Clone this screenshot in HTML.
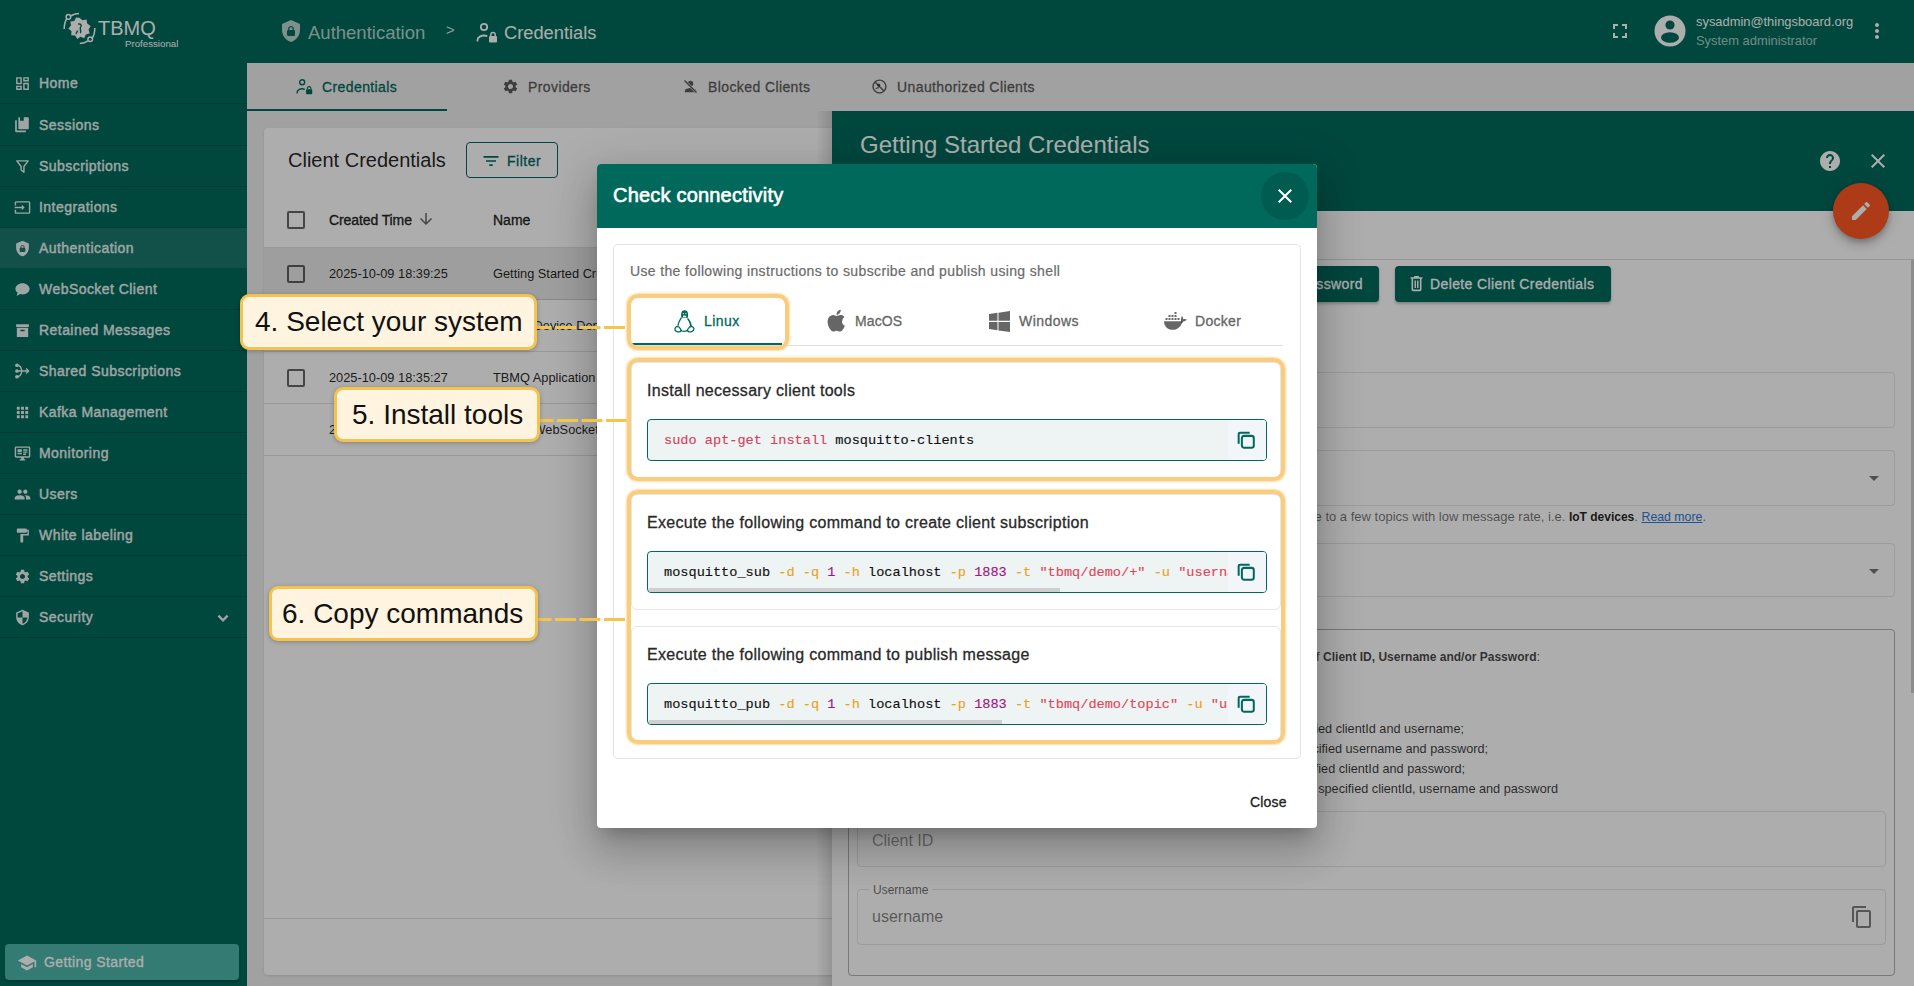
<!DOCTYPE html>
<html><head><meta charset="utf-8">
<style>
*{box-sizing:border-box;margin:0;padding:0}
html,body{width:1914px;height:986px;overflow:hidden;font-family:"Liberation Sans",sans-serif;background:#eeeeee;position:relative}
.a{position:absolute;white-space:nowrap}
svg{display:block}
#hdr{position:absolute;left:0;top:0;width:1914px;height:63px;background:#00695c}
#side{position:absolute;left:0;top:63px;width:247px;height:923px;background:#00695c}
.nav{position:absolute;left:0;width:247px;height:41px;border-bottom:1px solid rgba(0,0,0,0.16);color:#ebf3f2;font-size:14px;font-weight:normal;-webkit-text-stroke:0.4px currentColor;letter-spacing:0.45px}
.nav span{position:absolute;left:39px;top:12px}
.nav svg{position:absolute;left:14px;top:12px;width:17px;height:17px;fill:rgba(255,255,255,0.92)}
#tabs{position:absolute;left:247px;top:63px;width:1667px;height:48px;background:#eeeeee}
.tab{position:absolute;top:0;height:48px;font-size:14px;font-weight:normal;-webkit-text-stroke:0.3px currentColor;letter-spacing:0.4px;color:#5c5c5c}
.tab span{position:absolute;top:16px}
.tab svg{position:absolute;top:15px;width:17px;height:17px;fill:rgba(0,0,0,0.62)}
#card{position:absolute;left:264px;top:128px;width:620px;height:847px;background:#fff;border-radius:4px;box-shadow:0 1px 3px rgba(0,0,0,.12)}
#panel{position:absolute;left:832px;top:111px;width:1082px;height:875px;background:#ffffff}
#backdrop{position:absolute;left:0;top:0;width:1914px;height:986px;background:rgba(0,0,0,0.32)}
#dlg{position:absolute;left:597px;top:164px;width:720px;height:664px;background:#fff;border-radius:4px;box-shadow:0 11px 15px -7px rgba(0,0,0,.2),0 24px 38px 3px rgba(0,0,0,.14),0 9px 46px 8px rgba(0,0,0,.12);overflow:hidden}
#dlghdr{position:absolute;left:0;top:0;width:720px;height:64px;background:#00695c}
.ann{position:absolute;background:#fff4df;border:3px solid #f3c24f;border-radius:9px;font-size:28px;color:#111;box-shadow:0 1px 4px rgba(0,0,0,.25)}
.ann span{position:absolute;top:9px}
.dash{position:absolute;height:3px;background:repeating-linear-gradient(90deg,#f3c24f 0 14px,transparent 14px 22px)}
.hl{position:absolute;border:4px solid #f8cd80;border-radius:11px;box-shadow:0 0 2px 1px rgba(248,205,128,.7)}
.chk{position:absolute;width:18px;height:18px;border:2px solid rgba(0,0,0,0.6);border-radius:2px}
.row{position:absolute;left:0;width:620px;height:52px;border-bottom:1px solid rgba(0,0,0,0.12);font-size:12.8px;color:rgba(0,0,0,0.87)}
.fld{position:absolute;border:1px solid rgba(0,0,0,0.1);border-radius:4px}
.code{position:absolute;left:50px;width:620px;height:42px;background:#eef4f4;border:1px solid #00695c;border-radius:4px;overflow:hidden;font-family:"Liberation Mono",monospace;font-size:13.6px;color:#111}
.code .t{position:absolute;left:16px;top:13px;white-space:pre;-webkit-text-stroke:0.15px currentColor}
.code .cp{position:absolute;right:0;top:0;width:38px;height:40px;background:#f2f5f9}
.code .cp svg{position:absolute;left:7px;top:9px;width:22px;height:22px}
.code .sb{position:absolute;left:1px;bottom:0;height:4px;background:#cfcfcf;border-radius:0}
.sec{position:absolute;left:34px;width:650px;border:1px solid #e6e6e6;border-radius:6px;background:#fff}
.sec .ttl{position:absolute;left:15px;font-size:16px;font-weight:normal;-webkit-text-stroke:0.3px currentColor;color:#292929;letter-spacing:0.3px;white-space:nowrap}
.kw{color:#d7415f}.op{color:#e9a21a}.nm{color:#a3167f}.st{color:#e0475a}
</style></head><body>
<div id="hdr">
 <svg class="a" style="left:63px;top:12px" width="34" height="34" viewBox="0 0 34 34" fill="none" stroke="#fff" stroke-width="1.5">
  <path d="M1.2 17 C1.2 12 2.5 8.5 4 6.5"/><circle cx="5.4" cy="4.9" r="2.3"/><path d="M7.5 4 C10 2.5 13 1.8 16 1.6"/>
  <path d="M31.8 16 C31.8 21 30.5 24.5 29 26.5"/><circle cx="27.2" cy="27.3" r="2.3"/><path d="M25 28.8 C22.5 30.5 19.5 31.3 16.8 31.5"/>
  <path d="M16.4 5.8 L19.5 8.2 L23.5 7.6 L24.2 11.5 L27.6 14 L25.6 17.5 L26.6 21.4 L22.8 22.5 L21.3 26.2 L17.6 24.8 L14.2 27 L12.2 23.5 L8.2 23.2 L8.5 19.2 L5.4 16.6 L8 13.5 L7.4 9.6 L11.3 9 L13 5.4 Z" fill="#fff" stroke="none"/>
  <path d="M15 12.2 C17.5 11.5 19.2 13 17.6 15 C16.2 16.5 18.8 18.5 17.2 21 M14.6 18.5 L13 22" stroke="#00695c" stroke-width="1.4"/>
 </svg>
 <div class="a" style="left:98px;top:17px;font-size:20px;color:#fff">TBMQ</div>
 <div class="a" style="left:125px;top:38px;font-size:9.7px;color:#fff">Professional</div>
 <svg class="a" style="left:279px;top:19px" width="24" height="24" viewBox="0 0 24 24" fill="rgba(255,255,255,0.72)"><path d="M12 1L3 5v6c0 5.55 3.84 10.74 9 12 5.16-1.26 9-6.45 9-12V5l-9-4zm0 6c1.4 0 2.8 1.1 2.8 2.5V11c.6 0 1.2.6 1.2 1.2v3.5c0 .7-.6 1.3-1.2 1.3H9.2c-.7 0-1.2-.6-1.2-1.2v-3.5c0-.7.6-1.3 1.2-1.3V9.5C9.2 8.1 10.6 7 12 7zm0 1.2c-.8 0-1.5.5-1.5 1.3V11h3V9.5c0-.8-.7-1.3-1.5-1.3z" fill-rule="evenodd"/></svg>
 <div class="a" style="left:308px;top:22px;font-size:18.5px;color:rgba(255,255,255,0.72)">Authentication</div>
 <div class="a" style="left:446px;top:21px;font-size:15px;color:rgba(255,255,255,0.85)">&gt;</div>
 <svg class="a" style="left:476px;top:22px" width="22" height="21" viewBox="0 0 22 21" fill="none" stroke="#fff" stroke-width="1.8"><circle cx="8" cy="5" r="3.2"/><path d="M1.5 19.5 v-1.5 c0-3 4-4.5 6.5-4.5 c1.2 0 2.4.3 3.3.7"/><rect x="13" y="14" width="8" height="6.5" rx="1" fill="#fff" stroke="none"/><path d="M14.8 14.5 v-1.7 a2.2 2.2 0 0 1 4.4 0 v1.7" stroke-width="1.5"/></svg>
 <div class="a" style="left:504px;top:22px;font-size:18.3px;color:#fff">Credentials</div>
 <svg class="a" style="left:1608px;top:19px" width="24" height="24" viewBox="0 0 24 24" fill="#fff"><path d="M7 14H5v5h5v-2H7v-3zm-2-4h2V7h3V5H5v5zm12 7h-3v2h5v-5h-2v3zM14 5v2h3v3h2V5h-5z"/></svg>
 <svg class="a" style="left:1654px;top:15px" width="32" height="32" viewBox="0 0 32 32"><circle cx="16" cy="16" r="15.5" fill="#fff"/><circle cx="16" cy="10" r="4.6" fill="#00695c"/><ellipse cx="16" cy="22.5" rx="9" ry="5.2" fill="#00695c"/></svg>
 <div class="a" style="left:1696px;top:14px;font-size:12.9px;color:#fff">sysadmin@thingsboard.org</div>
 <div class="a" style="left:1696px;top:33px;font-size:12.9px;color:rgba(255,255,255,0.68)">System administrator</div>
 <svg class="a" style="left:1865px;top:19px" width="24" height="24" viewBox="0 0 24 24" fill="#fff"><path d="M12 8c1.1 0 2-.9 2-2s-.9-2-2-2-2 .9-2 2 .9 2 2 2zm0 2c-1.1 0-2 .9-2 2s.9 2 2 2 2-.9 2-2-.9-2-2-2zm0 6c-1.1 0-2 .9-2 2s.9 2 2 2 2-.9 2-2-.9-2-2-2z"/></svg>
</div>
<div id="side">
 <div class="nav" style="top:0"><svg viewBox="0 0 24 24"><path d="M19 5v2h-4V5h4M9 5v6H5V5h4m10 8v6h-4v-6h4M9 17v2H5v-2h4M21 3h-8v6h8V3zM11 3H3v10h8V3zm10 8h-8v10h8V11zm-10 4H3v6h8v-6z"/></svg><span>Home</span></div>
 <div class="nav" style="top:42px"><svg viewBox="0 0 24 24"><path d="M6.1 1.6a1.2 1.2 0 0 1 1.2-1.2h1.3v4.8h5.2V.4h5.9a1.2 1.2 0 0 1 1.2 1.2v14.4a1.2 1.2 0 0 1-1.2 1.2H7.3a1.2 1.2 0 0 1-1.2-1.2z"/><path d="M1.6 4.5H4v14.7h12.8v2.4H3.6a2 2 0 0 1-2-2z"/></svg><span>Sessions</span></div>
 <div class="nav" style="top:83px"><svg viewBox="0 0 24 24"><path d="M4 4h16l-6 8v8l-4-3v-5z" fill="none" stroke="rgba(255,255,255,0.92)" stroke-width="2" stroke-linejoin="round"/></svg><span>Subscriptions</span></div>
 <div class="nav" style="top:124px"><svg viewBox="0 0 24 24"><path d="M21 3.01H3c-1.1 0-2 .9-2 2V9h2V4.99h18v14.03H3V15H1v4.01c0 1.1.9 1.98 2 1.98h18c1.1 0 2-.88 2-1.98v-14c0-1.11-.9-2-2-2zM11 16l4-4-4-4v3H1v2h10v3z"/></svg><span>Integrations</span></div>
 <div class="nav" style="top:165px;background:rgba(255,255,255,0.1)"><svg viewBox="0 0 24 24"><path fill-rule="evenodd" d="M12 1L3 5v6c0 5.55 3.84 10.74 9 12 5.16-1.26 9-6.45 9-12V5l-9-4zm0 6c1.4 0 2.8 1.1 2.8 2.5V11c.6 0 1.2.6 1.2 1.2v3.5c0 .7-.6 1.3-1.2 1.3H9.2c-.7 0-1.2-.6-1.2-1.2v-3.5c0-.7.6-1.3 1.2-1.3V9.5C9.2 8.1 10.6 7 12 7zm0 1.2c-.8 0-1.5.5-1.5 1.3V11h3V9.5c0-.8-.7-1.3-1.5-1.3z"/></svg><span>Authentication</span></div>
 <div class="nav" style="top:206px"><svg viewBox="0 0 24 24"><path d="M12 3C6.5 3 2 6.6 2 11c0 2.2 1.1 4.1 2.9 5.6L4 21l4.6-2.5c1.1.3 2.2.5 3.4.5 5.5 0 10-3.6 10-8s-4.5-8-10-8z"/></svg><span>WebSocket Client</span></div>
 <div class="nav" style="top:247px"><svg viewBox="0 0 24 24"><path d="M3 3h18v4H3zM4 8h16v13H4zm5 3v2h6v-2z" fill-rule="evenodd"/></svg><span>Retained Messages</span></div>
 <div class="nav" style="top:288px"><svg viewBox="0 0 24 24"><circle cx="4.2" cy="3.2" r="2.6"/><circle cx="4.2" cy="11.3" r="2.6"/><circle cx="4.2" cy="19.4" r="2.6"/><path d="M4.5 3.2c4 0 6 4 6.5 8.1M4.5 19.4c4 0 6-4 6.5-8.1M5 11.3h15.5M17 7.8l3.6 3.5-3.6 3.5" fill="none" stroke="#ebf3f2" stroke-width="1.9"/></svg><span>Shared Subscriptions</span></div>
 <div class="nav" style="top:329px"><svg viewBox="0 0 24 24"><path d="M4 8h4V4H4v4zm6 12h4v-4h-4v4zm-6 0h4v-4H4v4zm0-6h4v-4H4v4zm6 0h4v-4h-4v4zm6-10v4h4V4h-4zm-6 4h4V4h-4v4zm6 6h4v-4h-4v4zm0 6h4v-4h-4v4z"/></svg><span>Kafka Management</span></div>
 <div class="nav" style="top:370px"><svg viewBox="0 0 24 24"><path d="M21 2H3c-1.1 0-2 .9-2 2v12c0 1.1.9 2 2 2h7v2H8v2h8v-2h-2v-2h7c1.1 0 2-.9 2-2V4c0-1.1-.9-2-2-2zm0 14H3V4h18v12zM5 6h6v4H5zm8 0h6v2h-6zm0 3h6v2h-6zM5 11h6v2H5zm8 1h4v2h-4z"/></svg><span>Monitoring</span></div>
 <div class="nav" style="top:411px"><svg viewBox="0 0 24 24"><path d="M16 11c1.66 0 2.99-1.34 2.99-3S17.66 5 16 5c-1.66 0-3 1.34-3 3s1.34 3 3 3zm-8 0c1.66 0 2.99-1.34 2.99-3S9.66 5 8 5C6.34 5 5 6.34 5 8s1.34 3 3 3zm0 2c-2.33 0-7 1.17-7 3.5V19h14v-2.5c0-2.33-4.67-3.5-7-3.5zm8 0c-.29 0-.62.02-.97.05 1.16.84 1.97 1.97 1.97 3.45V19h6v-2.5c0-2.33-4.67-3.5-7-3.5z"/></svg><span>Users</span></div>
 <div class="nav" style="top:452px"><svg viewBox="0 0 24 24"><path d="M18 4V3c0-.55-.45-1-1-1H5c-.55 0-1 .45-1 1v4c0 .55.45 1 1 1h12c.55 0 1-.45 1-1V6h1v4H9v11c0 .55.45 1 1 1h2c.55 0 1-.45 1-1v-9h8V4h-3z"/></svg><span>White labeling</span></div>
 <div class="nav" style="top:493px"><svg viewBox="0 0 24 24"><path d="M19.14 12.94c.04-.3.06-.61.06-.94 0-.32-.02-.64-.07-.94l2.03-1.58c.18-.14.23-.41.12-.61l-1.92-3.32c-.12-.22-.37-.29-.59-.22l-2.39.96c-.5-.38-1.03-.7-1.62-.94L14.4 2.81c-.04-.24-.24-.41-.48-.41h-3.84c-.24 0-.43.17-.47.41L9.25 5.35C8.66 5.59 8.12 5.92 7.63 6.29L5.24 5.33c-.22-.08-.47 0-.59.22L2.74 8.87c-.12.21-.08.47.12.61l2.03 1.58c-.05.3-.09.63-.09.94s.02.64.07.94l-2.03 1.58c-.18.14-.23.41-.12.61l1.92 3.32c.12.22.37.29.59.22l2.39-.96c.5.38 1.03.7 1.62.94l.36 2.54c.05.24.24.41.48.41h3.84c.24 0 .44-.17.47-.41l.36-2.54c.59-.24 1.13-.56 1.62-.94l2.39.96c.22.08.47 0 .59-.22l1.92-3.32c.12-.22.07-.47-.12-.61l-2.01-1.58zM12 15.6c-1.98 0-3.6-1.62-3.6-3.6s1.62-3.6 3.6-3.6 3.6 1.62 3.6 3.6-1.62 3.6-3.6 3.6z"/></svg><span>Settings</span></div>
 <div class="nav" style="top:534px"><svg viewBox="0 0 24 24"><path d="M12 1L3 5v6c0 5.55 3.84 10.74 9 12 5.16-1.26 9-6.45 9-12V5l-9-4zm0 10.99h7c-.53 4.12-3.28 7.79-7 8.94V12H5V6.3l7-3.11v8.8z"/></svg><span>Security</span><svg style="left:212px;top:10px;width:22px;height:22px" viewBox="0 0 24 24"><path d="M7 9.5l5 5 5-5" fill="none" stroke="rgba(255,255,255,0.92)" stroke-width="2.6"/></svg></div>
 <div class="a" style="left:5px;top:881px;width:234px;height:36px;background:#4db6ac;border-radius:4px;box-shadow:0 2px 2px rgba(0,0,0,.2)">
  <svg class="a" style="left:12px;top:9px" width="20" height="20" viewBox="0 0 24 24" fill="#fff"><path d="M5 13.18v4L12 21l7-3.82v-4L12 17l-7-3.82zM12 3L1 9l11 6 9-4.91V17h2V9L12 3z"/></svg>
  <div class="a" style="left:39px;top:10px;font-size:14px;font-weight:normal;-webkit-text-stroke:0.3px currentColor;letter-spacing:0.4px;color:#fff">Getting Started</div>
 </div>
</div>
<div id="tabs">
 <div class="tab" style="left:0;width:200px;color:#00695c"><svg style="left:49px;fill:none;stroke:#00695c" viewBox="0 0 22 21" stroke-width="1.8"><circle cx="8" cy="5" r="3.2"/><path d="M1.5 19.5 v-1.5 c0-3 4-4.5 6.5-4.5 c1.2 0 2.4.3 3.3.7"/><rect x="13" y="14" width="8" height="6.5" rx="1" fill="#00695c" stroke="none"/><path d="M14.8 14.5 v-1.7 a2.2 2.2 0 0 1 4.4 0 v1.7" stroke-width="1.5"/></svg><span style="left:75px">Credentials</span>
  <div class="a" style="left:0;top:46px;width:200px;height:2px;background:#00695c"></div></div>
 <div class="tab" style="left:200px;width:200px"><svg style="left:55px" viewBox="0 0 24 24"><path d="M19.14 12.94c.04-.3.06-.61.06-.94 0-.32-.02-.64-.07-.94l2.03-1.58c.18-.14.23-.41.12-.61l-1.920-3.32c-.12-.22-.37-.29-.59-.22l-2.39.96c-.5-.38-1.03-.7-1.62-.94L14.4 2.81c-.04-.24-.24-.41-.48-.41h-3.84c-.24 0-.43.17-.47.41L9.25 5.35C8.66 5.59 8.12 5.92 7.630 6.29L5.24 5.33c-.22-.08-.47 0-.59.22L2.74 8.87c-.12.21-.08.47.12.61l2.03 1.58c-.05.3-.09.63-.09.94s.02.64.07.94l-2.03 1.58c-.18.14-.23.41-.12.61l1.92 3.32c.12.22.37.29.59.22l2.39-.96c.5.38 1.030.7 1.62.94l.36 2.54c.05.24.24.41.48.41h3.84c.24 0 .44-.17.47-.41l.36-2.54c.59-.24 1.13-.56 1.62-.94l2.39.96c.22.08.47 0 .59-.22l1.92-3.32c.12-.22.07-.47-.12-.61l-2.01-1.58zM12 15.6c-1.98 0-3.6-1.620-3.6-3.6s1.62-3.6 3.6-3.6 3.6 1.62 3.6 3.6-1.62 3.6-3.6 3.6z"/></svg><span style="left:81px">Providers</span></div>
 <div class="tab" style="left:400px;width:200px"><svg style="left:35px" viewBox="0 0 24 24"><path d="M12 12c2.21 0 4-1.79 4-4s-1.79-4-4-4-4 1.79-4 4 1.79 4 4 4zm0 2c-2.67 0-8 1.34-8 4v2h16v-2c0-2.66-5.33-4-8-4z"/><path d="M3 3l18 18" stroke="#eeeeee" stroke-width="3.5"/><path d="M3.5 3.5l17 17" stroke="rgba(0,0,0,0.62)" stroke-width="2"/></svg><span style="left:61px">Blocked Clients</span></div>
 <div class="tab" style="left:600px;width:212px"><svg style="left:24px" viewBox="0 0 24 24"><path d="M12 2C6.48 2 2 6.48 2 12s4.48 10 10 10 10-4.48 10-10S17.52 2 12 2zm0 18c-4.42 0-8-3.58-8-8 0-1.85.63-3.55 1.69-4.9L16.9 18.31C15.55 19.37 13.85 20 12 20zm6.31-3.1L7.1 5.69C8.45 4.63 10.15 4 12 4c4.42 0 8 3.58 8 8 0 1.85-.63 3.55-1.69 4.9z"/><circle cx="11" cy="10" r="2.2"/><path d="M7 15.5c1-1.3 2.6-1.8 4-1.8" stroke="rgba(0,0,0,0.62)" stroke-width="1.8" fill="none"/></svg><span style="left:50px">Unauthorized Clients</span></div>
</div>
<div id="card">
 <div class="a" style="left:24px;top:21px;font-size:20px;color:rgba(0,0,0,0.87)">Client Credentials</div>
 <div class="a" style="left:202px;top:14px;width:92px;height:36px;border:1px solid #00695c;border-radius:4px">
  <svg class="a" style="left:14px;top:8px" width="20" height="20" viewBox="0 0 24 24" fill="#00695c"><path d="M10 18h4v-2h-4v2zM3 6v2h18V6H3zm3 7h12v-2H6v2z"/></svg>
  <div class="a" style="left:40px;top:10px;font-size:14px;font-weight:normal;-webkit-text-stroke:0.3px currentColor;letter-spacing:0.5px;color:#00695c">Filter</div>
 </div>
 <div class="chk" style="left:23px;top:83px"></div>
 <div class="a" style="left:65px;top:84px;font-size:14px;font-weight:normal;-webkit-text-stroke:0.3px currentColor;letter-spacing:-0.1px;color:#222">Created Time</div>
 <svg class="a" style="left:153px;top:82px" width="18" height="18" viewBox="0 0 24 24" fill="rgba(0,0,0,0.6)"><path d="M20 12l-1.41-1.41L13 16.17V4h-2v12.17l-5.58-5.59L4 12l8 8 8-8z"/></svg>
 <div class="a" style="left:229px;top:84px;font-size:14px;font-weight:normal;-webkit-text-stroke:0.3px currentColor;color:#222">Name</div>
 <div class="a" style="left:0;top:119px;width:620px;height:1px;background:rgba(0,0,0,0.12)"></div>
 <div class="row" style="top:120px;background:#e9e9e9"><div class="chk" style="left:23px;top:17px"></div><div class="a" style="left:65px;top:18px">2025-10-09 18:39:25</div><div class="a" style="left:229px;top:18px">Getting Started Credentials</div></div>
 <div class="row" style="top:172px"><div class="chk" style="left:23px;top:17px"></div><div class="a" style="left:65px;top:18px">2025-10-09 18:37:02</div><div class="a" style="left:229px;top:18px">TBMQ Device Demo Credentials</div></div>
 <div class="row" style="top:224px"><div class="chk" style="left:23px;top:17px"></div><div class="a" style="left:65px;top:18px">2025-10-09 18:35:27</div><div class="a" style="left:229px;top:18px">TBMQ Application Credentials</div></div>
 <div class="row" style="top:276px"><div class="a" style="left:65px;top:18px">2025-10-09 18:35:27</div><div class="a" style="left:229px;top:18px">TBMQ WebSocket Credentials</div></div>
 <div class="a" style="left:0;top:790px;width:620px;height:1px;background:rgba(0,0,0,0.12)"></div>
</div>
<div id="panel">
 <div class="a" style="left:-16px;top:0;width:16px;height:875px;background:linear-gradient(to right,rgba(0,0,0,0),rgba(0,0,0,0.14))"></div>
 <div class="a" style="left:0;top:0;width:1082px;height:100px;background:#00695c"></div>
 <div class="a" style="left:28px;top:20px;font-size:24px;color:#fff">Getting Started Credentials</div>
 <svg class="a" style="left:986px;top:38px" width="24" height="24" viewBox="0 0 24 24" fill="#fff"><path d="M12 2C6.48 2 2 6.48 2 12s4.48 10 10 10 10-4.48 10-10S17.52 2 12 2zm1 17h-2v-2h2v2zm2.07-7.750l-.9.92C13.45 12.9 13 13.5 13 15h-2v-.5c0-1.1.45-2.1 1.17-2.83l1.24-1.26c.37-.36.59-.86.59-1.41 0-1.1-.9-2-2-2s-2 .9-2 2H8c0-2.21 1.79-4 4-4s4 1.79 4 4c0 .88-.36 1.68-.93 2.25z"/></svg>
 <svg class="a" style="left:1034px;top:38px" width="24" height="24" viewBox="0 0 24 24" fill="#fff"><path d="M19 6.41L17.59 5 12 10.59 6.41 5 5 6.41 10.59 12 5 17.590 6.41 19 12 13.41 17.59 19 19 17.59 13.41 12z"/></svg>
 <div class="a" style="left:0;top:100px;width:1082px;height:49px;background:#ffffff;border-bottom:1px solid rgba(0,0,0,0.14)"></div>
 <div class="a" style="left:1079px;top:149px;width:3px;height:433px;background:#d0d0d0"></div>
 <div class="a" style="left:300px;top:155px;width:247px;height:36px;background:#00695c;border-radius:4px;box-shadow:0 2px 3px rgba(0,0,0,.25)"><div class="a" style="right:16px;top:10px;font-size:14px;font-weight:normal;-webkit-text-stroke:0.3px currentColor;letter-spacing:0.38px;color:#fff">Change Client Password</div></div>
 <div class="a" style="left:563px;top:155px;width:216px;height:36px;background:#00695c;border-radius:4px;box-shadow:0 2px 3px rgba(0,0,0,.25)">
  <svg class="a" style="left:12px;top:8px" width="19" height="19" viewBox="0 0 24 24" fill="#fff"><path d="M9 2.5v1.5H4.5v2h1.2v13.5a2.2 2.2 0 002.2 2.2h8.2a2.2 2.2 0 002.2-2.2V6h1.2V4H15V2.5H9zM7.7 6h8.6v13.7H7.7V6zm1.8 2.2v9.6h1.8V8.2H9.5zm3.2 0v9.6h1.8V8.2h-1.8z"/></svg>
  <div class="a" style="left:35px;top:10px;font-size:14px;font-weight:normal;-webkit-text-stroke:0.3px currentColor;letter-spacing:0.38px;color:#fff">Delete Client Credentials</div>
 </div>
 <div class="fld" style="left:25px;top:261px;width:1038px;height:56px"></div>
 <div class="fld" style="left:25px;top:339px;width:1038px;height:56px"></div>
 <svg class="a" style="left:1030px;top:355px" width="24" height="24" viewBox="0 0 24 24" fill="rgba(0,0,0,0.54)"><path d="M7 10l5 5 5-5z"/></svg>
 <div class="a" style="right:208px;top:398px;font-size:13px;color:rgba(0,0,0,0.56)">Use this mode to subscribe to a few topics with low message rate, i.e. <b style="font-size:12px;color:rgba(0,0,0,0.87)">IoT devices</b>. <span style="font-size:12.3px;color:#2e7bd6;text-decoration:underline">Read more</span>.</div>
 <div class="fld" style="left:25px;top:432px;width:1038px;height:54px"></div>
 <svg class="a" style="left:1030px;top:448px" width="24" height="24" viewBox="0 0 24 24" fill="rgba(0,0,0,0.54)"><path d="M7 10l5 5 5-5z"/></svg>
 <div class="fld" style="left:16px;top:518px;width:1047px;height:347px;border-color:rgba(0,0,0,0.3)"></div>
 <div class="a" style="right:374px;top:539px;font-size:12.7px;color:rgba(0,0,0,0.74)">Authenticate client using one of these combinations of <b style="font-size:12px">Client ID, Username and/or Password</b>:</div>
 <div class="a" style="right:450px;top:611px;font-size:12.7px;color:rgba(0,0,0,0.78)">Client will be authenticated by the specified clientId and username;</div>
 <div class="a" style="right:426px;top:631px;font-size:12.7px;color:rgba(0,0,0,0.78)">Client will be authenticated by the specified username and password;</div>
 <div class="a" style="right:449px;top:651px;font-size:12.7px;color:rgba(0,0,0,0.78)">Client will be authenticated by the specified clientId and password;</div>
 <div class="a" style="right:356px;top:671px;font-size:12.7px;color:rgba(0,0,0,0.78)">Client will be authenticated by the specified clientId, username and password</div>
 <div class="fld" style="left:25px;top:700px;width:1029px;height:56px"></div>
 <div class="a" style="left:40px;top:721px;font-size:16px;color:rgba(0,0,0,0.42)">Client ID</div>
 <div class="fld" style="left:25px;top:778px;width:1029px;height:56px"></div>
 <div class="a" style="left:37px;top:772px;padding:0 4px;background:#ffffff;font-size:12px;color:rgba(0,0,0,0.6)">Username</div>
 <div class="a" style="left:40px;top:797px;font-size:16px;color:rgba(0,0,0,0.5)">username</div>
 <svg class="a" style="left:1018px;top:794px" width="24" height="24" viewBox="0 0 24 24" fill="rgba(0,0,0,0.5)"><path d="M16 1H4c-1.1 0-2 .9-2 2v14h2V3h12V1zm3 4H8c-1.1 0-2 .9-2 2v14c0 1.1.9 2 2 2h11c1.1 0 2-.9 2-2V7c0-1.1-.9-2-2-2zm0 16H8V7h11v14z"/></svg>
</div>
<div class="a" style="left:1833px;top:183px;width:56px;height:56px;border-radius:50%;background:#ff5722;box-shadow:0 3px 5px -1px rgba(0,0,0,.2),0 6px 10px rgba(0,0,0,.14),0 1px 18px rgba(0,0,0,.12)">
 <svg class="a" style="left:16px;top:16px" width="24" height="24" viewBox="0 0 24 24" fill="#fff"><path d="M3 17.25V21h3.75L17.81 9.94l-3.75-3.75L3 17.25zM20.71 7.04c.39-.39.39-1.02 0-1.41l-2.34-2.34c-.39-.39-1.02-.39-1.41 0l-1.83 1.83 3.75 3.75 1.83-1.83z"/></svg>
</div>
<div id="backdrop"></div>
<div id="dlg"><div id="dlghdr">
  <div class="a" style="left:16px;top:20px;font-size:20px;-webkit-text-stroke:0.6px #fff;letter-spacing:0.2px;color:#fff">Check connectivity</div>
  <div class="a" style="left:664px;top:8px;width:48px;height:48px;border-radius:50%;background:rgba(0,0,0,0.12)">
   <svg class="a" style="left:12px;top:12px" width="24" height="24" viewBox="0 0 24 24" fill="#fff"><path d="M19 6.41L17.59 5 12 10.59 6.41 5 5 6.41 10.59 12 5 17.59 6.41 19 12 13.41 17.59 19 19 17.59 13.41 12z"/></svg>
  </div>
 </div>
 <div class="a" style="left:16px;top:80px;width:688px;height:515px;border:1px solid #e3e3e3;border-radius:5px"></div>
 <div class="a" style="left:33px;top:99px;font-size:14px;color:#6b6b6b;-webkit-text-stroke:0.2px #6b6b6b;letter-spacing:0.36px">Use the following instructions to subscribe and publish using shell</div>
 <div class="a" style="left:33px;top:181px;width:653px;height:1px;background:#e0e0e0"></div>
 <div class="a" style="left:32px;top:179px;width:153px;height:2px;background:#00695c"></div>
 <svg class="a" style="left:77px;top:146px" width="21" height="23" viewBox="0 0 21 23" fill="none" stroke="#00695c" stroke-width="1.3">
  <path d="M7.3 7.8 C6.9 5 7 2.5 8.2 1.1 C9.2 0.1 12 0.1 13 1.1 C14.2 2.5 14.3 5 13.9 7.8 Z" fill="#00695c" stroke="none"/>
  <circle cx="9.2" cy="3.6" r=".65" fill="#fff" stroke="none"/><circle cx="11.9" cy="3.6" r=".65" fill="#fff" stroke="none"/>
  <ellipse cx="10.6" cy="6.4" rx="1.7" ry=".9" fill="#fff" stroke="none"/>
  <path d="M7.4 7.6 C5.8 9.8 4.4 12.5 3.8 15.8"/>
  <path d="M13.7 7.4 C15.6 9.5 17.6 12.5 17.9 16.2 L16.3 17.2 C16.1 14.2 15 11.5 13.3 9.6 Z" fill="#00695c" stroke="none"/>
  <path d="M6.5 20.3 C8.5 21.6 12.2 21.6 13.8 20.3"/>
  <path d="M1 18.6 C1.4 16.6 3.7 16 5.1 17.1 C6.4 18.5 7.4 20 6.9 21 C6.1 22.1 4.4 22 2.4 21.3 C1.2 20.8 0.8 19.9 1 18.6Z"/>
  <path d="M19.9 18.4 C19.2 16.4 16.9 16 15.5 17.1 C14.1 18.5 13.1 20 13.7 21 C14.5 22.1 16.2 22 18.2 21.3 C19.5 20.8 20 19.8 19.9 18.4Z"/>
 </svg>
 <div class="a" style="left:107px;top:149px;font-size:14px;font-weight:normal;-webkit-text-stroke:0.3px currentColor;letter-spacing:0.45px;color:#00695c">Linux</div>
 <svg class="a" style="left:228px;top:145px" width="21" height="23" viewBox="0 0 20 22" fill="rgba(0,0,0,0.6)"><path d="M16.5 11.6c0-2.6 2.1-3.8 2.2-3.9-1.2-1.8-3.1-2-3.7-2-1.6-.2-3.1.9-3.9.9-.8 0-2-.9-3.4-.9C5.9 5.8 4.2 6.9 3.3 8.5c-1.8 3.1-.5 7.8 1.3 10.300.9 1.3 1.900 2.7 3.2 2.7 1.3-.1 1.8-.8 3.300-.8 1.6 0 2 .8 3.4.8 1.4 0 2.300-1.300 3.100-2.600 1-1.500 1.400-2.900 1.400-3-.1 0-2.800-1.100-2.800-4.300zM14 4c.7-.9 1.2-2 1-3.200-1 0-2.300.7-3 1.600-.6.700-1.200 1.900-1 3.100 1.100.1 2.300-.6 3-1.500z"/></svg>
 <div class="a" style="left:258px;top:149px;font-size:14px;font-weight:normal;-webkit-text-stroke:0.3px currentColor;letter-spacing:0.1px;color:#666">MacOS</div>
 <svg class="a" style="left:392px;top:147px" width="21" height="21" viewBox="0 0 21 21" fill="rgba(0,0,0,0.6)"><path d="M0 3l8.5-1.2v8H0zM9.5 1.7L21 0v9.8H9.5zM0 11h8.5v8.2L0 18zM9.5 11H21v10l-11.5-1.600z"/></svg>
 <div class="a" style="left:422px;top:149px;font-size:14px;font-weight:normal;-webkit-text-stroke:0.3px currentColor;letter-spacing:0.45px;color:#666">Windows</div>
 <svg class="a" style="left:566px;top:147px" width="26" height="22" viewBox="0 0 26 22" fill="rgba(0,0,0,0.6)"><path d="M1 10.2H19.3C18.8 14.8 15 18.8 9.6 18.8 4.6 18.8 1.1 15.6 1 10.2Z"/><path d="M18.1 10.3C17.7 8.3 18 6.3 19 5 19.7 5.9 20.1 7 20.3 8.2 21.6 7.7 22.9 7.9 23.9 8.6 23.2 9.8 21.9 10.4 20.4 10.5 19.8 11.5 19.1 12 18.4 12.2Z"/><path d="M2.5 7h2v2h-2zM5.5 7h2v2h-2zM8.5 7h2v2h-2zM11.5 7h2v2h-2zM14.5 7h2v2h-2zM5.5 4.1h2v2h-2zM8.5 4.1h2v2h-2zM11.5 4.1h2v2h-2zM11.5 1.1h2v2h-2z"/></svg>
 <div class="a" style="left:598px;top:149px;font-size:14px;font-weight:normal;-webkit-text-stroke:0.3px currentColor;letter-spacing:0.3px;color:#666">Docker</div>

 <div class="sec" style="top:198px;height:116px"><div class="ttl" style="top:19px">Install necessary client tools</div>
  <div class="code" style="left:15px;top:56px"><div class="t"><span class="kw">sudo</span> <span class="kw">apt-get</span> <span class="kw">install</span> mosquitto-clients</div><div class="cp"><svg viewBox="0 0 24 24" fill="none" stroke="#00695c" stroke-width="2.2"><rect x="7.5" y="7.5" width="13" height="13" rx="2.5"/><path d="M4 16V5.5C4 4.700 4.700 4 5.500 4H16"/></svg></div></div>
 </div>
 <div class="sec" style="top:330px;height:116px"><div class="ttl" style="top:19px">Execute the following command to create client subscription</div>
  <div class="code" style="left:15px;top:56px"><div class="t">mosquitto_sub <span class="op">-d</span> <span class="op">-q</span> <span class="nm">1</span> <span class="op">-h</span> localhost <span class="op">-p</span> <span class="nm">1883</span> <span class="op">-t</span> <span class="st">"tbmq/demo/+"</span> <span class="op">-u</span> <span class="st">"username"</span> <span class="op">-P</span> <span class="st">"password"</span></div><div class="sb" style="width:411px"></div><div class="cp"><svg viewBox="0 0 24 24" fill="none" stroke="#00695c" stroke-width="2.2"><rect x="7.5" y="7.5" width="13" height="13" rx="2.5"/><path d="M4 16V5.5C4 4.700 4.700 4 5.500 4H16"/></svg></div></div>
 </div>
 <div class="sec" style="top:462px;height:116px"><div class="ttl" style="top:19px">Execute the following command to publish message</div>
  <div class="code" style="left:15px;top:56px"><div class="t">mosquitto_pub <span class="op">-d</span> <span class="op">-q</span> <span class="nm">1</span> <span class="op">-h</span> localhost <span class="op">-p</span> <span class="nm">1883</span> <span class="op">-t</span> <span class="st">"tbmq/demo/topic"</span> <span class="op">-u</span> <span class="st">"username"</span> <span class="op">-P</span> <span class="st">"password"</span> <span class="op">-m</span> <span class="st">"Hello World"</span></div><div class="sb" style="width:353px"></div><div class="cp"><svg viewBox="0 0 24 24" fill="none" stroke="#00695c" stroke-width="2.2"><rect x="7.5" y="7.5" width="13" height="13" rx="2.5"/><path d="M4 16V5.5C4 4.700 4.700 4 5.500 4H16"/></svg></div></div>
 </div>
 <div class="a" style="left:653px;top:630px;font-size:14px;font-weight:normal;-webkit-text-stroke:0.3px currentColor;letter-spacing:0.2px;color:#222">Close</div>
</div>
<svg class="a" style="left:536px;top:324px" width="92" height="7"><line x1="89" y1="3.5" x2="0" y2="3.5" stroke="#f3c54c" stroke-width="3" stroke-dasharray="21 3.5"/></svg>
<svg class="a" style="left:538px;top:417px" width="92" height="7"><line x1="89" y1="3.5" x2="0" y2="3.5" stroke="#f3c54c" stroke-width="3" stroke-dasharray="21 3.5"/></svg>
<svg class="a" style="left:536px;top:616px" width="92" height="7"><line x1="89" y1="3.5" x2="0" y2="3.5" stroke="#f3c54c" stroke-width="3" stroke-dasharray="21 3.5"/></svg>
<div class="hl" style="left:627px;top:294px;width:162px;height:56px"></div>
<div class="hl" style="left:627px;top:358px;width:658px;height:123px"></div>
<div class="hl" style="left:627px;top:490px;width:658px;height:254px"></div>
<div class="ann" style="left:240px;top:294px;width:297px;height:56px"><span style="left:12px">4. Select your system</span></div>
<div class="ann" style="left:334px;top:387px;width:206px;height:55px"><span style="left:15px">5. Install tools</span></div>
<div class="ann" style="left:269px;top:586px;width:269px;height:55px"><span style="left:10px">6. Copy commands</span></div>
</body></html>
